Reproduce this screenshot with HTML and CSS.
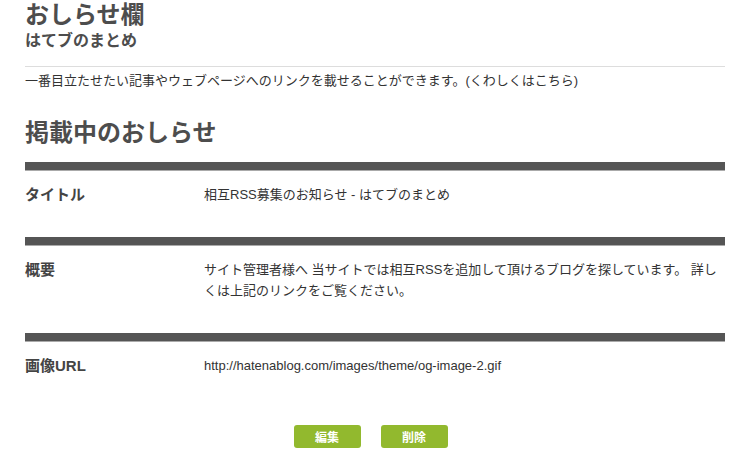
FILE: index.html
```html
<!DOCTYPE html>
<html lang="ja">
<head>
    <meta charset="UTF-8">
    <meta name="viewport" content="width=device-width, initial-scale=1.0">
    <title>おしらせ欄</title>
    <link rel="stylesheet" href="styles.css">
</head>
<body>
    <div class="page">
        <div class="page-head">
            <h1 class="page-title">おしらせ欄</h1>
            <div class="page-sub">はてブのまとめ</div>
        </div>
        <p class="lead">一番目立たせたい記事やウェブページへのリンクを載せることができます。<a href="#">(くわしくはこちら)</a></p>

        <h2 class="section-title">掲載中のおしらせ</h2>

        <table class="info">
            <tr>
                <th>タイトル</th>
                <td>相互RSS募集のお知らせ - はてブのまとめ</td>
            </tr>
            <tr>
                <th>概要</th>
                <td>サイト管理者様へ 当サイトでは相互RSSを追加して頂けるブログを探しています。 詳しくは上記のリンクをご覧ください。</td>
            </tr>
            <tr>
                <th>画像URL</th>
                <td>http://hatenablog.com/images/theme/og-image-2.gif</td>
            </tr>
        </table>

        <div class="actions">
            <button class="btn">編集</button>
            <button class="btn">削除</button>
        </div>
    </div>
</body>
</html>
```

FILE: styles.css
```css
body {
    margin: 0;
    background: #fff;
    color: #333;
    font-family: "Liberation Sans", "Noto Sans CJK JP", sans-serif;
}

.page {
    padding: 0 9px 0 25px;
}

.page-head {
    padding-top: 1px;
    padding-bottom: 15px;
    border-bottom: 1px solid #ddd;
}

.page-title {
    margin: 0;
    font-size: 24px;
    line-height: 28px;
    color: #4d4d4d;
}

.page-sub {
    margin-top: 2px;
    font-size: 16px;
    font-weight: bold;
    line-height: 20px;
    color: #4d4d4d;
}

.lead {
    margin: 5px 0 0;
    font-size: 13px;
    line-height: 18px;
}

.lead a {
    color: #333;
    text-decoration: none;
}

.section-title {
    margin: 28px 0 0;
    font-size: 24px;
    line-height: 30px;
    color: #4d4d4d;
}

.info {
    width: 100%;
    margin-top: 14px;
    border-collapse: collapse;
}

.info th,
.info td {
    border-top: 8px solid #555;
    box-shadow: inset 0 1px 0 #aaa;
    padding: 14px 0 32px;
    vertical-align: top;
    text-align: left;
    line-height: 21px;
}

.info th {
    width: 179px;
    font-size: 15px;
    color: #444;
}

.info td {
    font-size: 13px;
}

.actions {
    display: flex;
    justify-content: center;
    gap: 20px;
    margin-top: 17px;
    padding-right: 9px;
}

.btn {
    width: 67px;
    height: 23px;
    padding: 0;
    border: none;
    border-radius: 3px;
    background: #92b92e;
    color: #fff;
    font-family: inherit;
    font-size: 12px;
    font-weight: bold;
    cursor: pointer;
}
```
